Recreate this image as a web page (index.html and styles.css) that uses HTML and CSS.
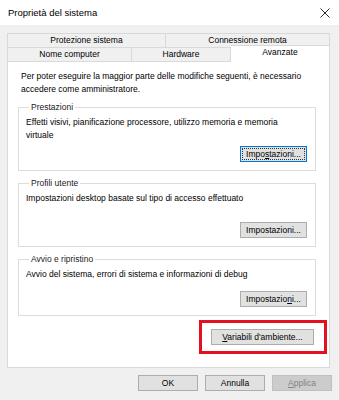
FILE: index.html
```html
<!DOCTYPE html>
<html lang="it">
<head>
<meta charset="UTF-8">
<meta name="viewport" content="width=device-width, initial-scale=1.0">
<title>Proprietà del sistema</title>
<link rel="stylesheet" href="styles.css">
</head>
<body>
<div class="window">
<div class="titlebar">
<span class="title">Proprietà del sistema</span>
<svg class="close" width="10" height="10" viewBox="0 0 10 10">
<path d="M0.5 0.5 L9.5 9.5 M9.5 0.5 L0.5 9.5" stroke="#111" stroke-width="0.9" fill="none"/>
</svg>
</div>
<div class="content">
<div class="tabs">
<div class="tab-row">
<div class="tab back-left">Protezione sistema</div>
<div class="tab back-right">Connessione remota</div>
</div>
<div class="tab-row">
<div class="tab name">Nome computer</div>
<div class="tab hw">Hardware</div>
<div class="tab active">Avanzate</div>
</div>
</div>
<div class="panel">
<p class="intro">Per poter eseguire la maggior parte delle modifiche seguenti, è necessario accedere come amministratore.</p>
<fieldset class="group">
<legend>Prestazioni</legend>
<div class="group-body tall">
<p>Effetti visivi, pianificazione processore, utilizzo memoria e memoria virtuale</p>
<button type="button" class="btn focused">Impo<u>s</u>tazioni...</button>
</div>
</fieldset>
<fieldset class="group">
<legend>Profili utente</legend>
<div class="group-body tall">
<p>Impostazioni desktop basate sul tipo di accesso effettuato</p>
<button type="button" class="btn">Impostazioni...</button>
</div>
</fieldset>
<fieldset class="group">
<legend>Avvio e ripristino</legend>
<div class="group-body short">
<p>Avvio del sistema, errori di sistema e informazioni di debug</p>
<button type="button" class="btn">Impostazio<u>n</u>i...</button>
</div>
</fieldset>
<div class="env-row">
<div class="highlight">
<button type="button" class="btn env"><u>V</u>ariabili d'ambiente...</button>
</div>
</div>
</div>
<div class="footer">
<button type="button" class="btn wide">OK</button>
<button type="button" class="btn wide">Annulla</button>
<button type="button" class="btn wide" disabled><u>A</u>pplica</button>
</div>
</div>
</div>
</body>
</html>
```

FILE: styles.css
```css
body {
    margin: 0;
    font-family: "Liberation Sans", Arial, sans-serif;
    font-size: 8.5px;
    color: #000;
    background: #f0f0f0;
}
.window {
    width: 339px;
    height: 400px;
    overflow: hidden;
    background: #f0f0f0;
}
.titlebar {
    height: 25px;
    background: #fff;
    display: flex;
    align-items: center;
    justify-content: space-between;
    padding: 0 9px 0 8px;
    box-sizing: border-box;
}
.title {
    font-size: 9.5px;
    color: #000;
}
.content {
    padding: 8px 9px 0 7px;
}
.tab-row {
    display: flex;
    height: 14px;
}
.tab {
    box-sizing: border-box;
    border: 1px solid #d9d9d9;
    border-bottom: none;
    background: #f0f0f0;
    text-align: center;
    line-height: 13px;
    white-space: nowrap;
}
.back-left {
    width: 159px;
}
.back-right {
    width: 164px;
    border-left: none;
}
.name {
    width: 125px;
}
.hw {
    width: 99px;
    border-left: none;
}
.tab.active {
    width: 99px;
    height: 17px;
    margin-top: -2px;
    border-left: none;
    background: #fff;
    line-height: 13px;
    position: relative;
    z-index: 1;
}
.panel {
    box-sizing: border-box;
    height: 307px;
    background: #fff;
    border: 1px solid #d9d9d9;
    padding: 8px 13px 0 10px;
}
.intro {
    margin: 0 0 5px 3px;
    line-height: 13px;
}
.group {
    margin: 0 0 6px 0;
    padding: 3px 8px 8px 7px;
    border: 1px solid #dcdcdc;
}
.group legend {
    padding: 0 2px;
    margin-left: 3px;
    line-height: 12px;
    color: #1a1a1a;
}
.group-body {
    display: flex;
    flex-direction: column;
}
.group-body p {
    margin: 0;
    line-height: 13px;
}
.group-body.tall {
    height: 46px;
}
.group-body.short {
    height: 39px;
}
.group-body .btn {
    margin-top: auto;
    align-self: flex-end;
    width: 67px;
}
.btn {
    height: 16px;
    box-sizing: border-box;
    padding: 0;
    font-family: inherit;
    font-size: 8.5px;
    color: #000;
    background: #e1e1e1;
    border: 1px solid #adadad;
}
.btn.focused {
    border-color: #0078d7;
    outline: 1px dotted #333;
    outline-offset: -3px;
}
.btn:disabled {
    background: #cccccc;
    border-color: #bfbfbf;
    color: #838383;
}
.env-row {
    display: flex;
    justify-content: flex-end;
    margin: -2px -11px 0 0;
}
.highlight {
    border: 3px solid #e3101d;
    padding: 6px 10px 6px 9px;
}
.btn.env {
    width: 103px;
}
.footer {
    display: flex;
    justify-content: flex-end;
    gap: 7px;
    margin: 7px -2px 0 0;
}
.btn.wide {
    width: 60px;
}
```
